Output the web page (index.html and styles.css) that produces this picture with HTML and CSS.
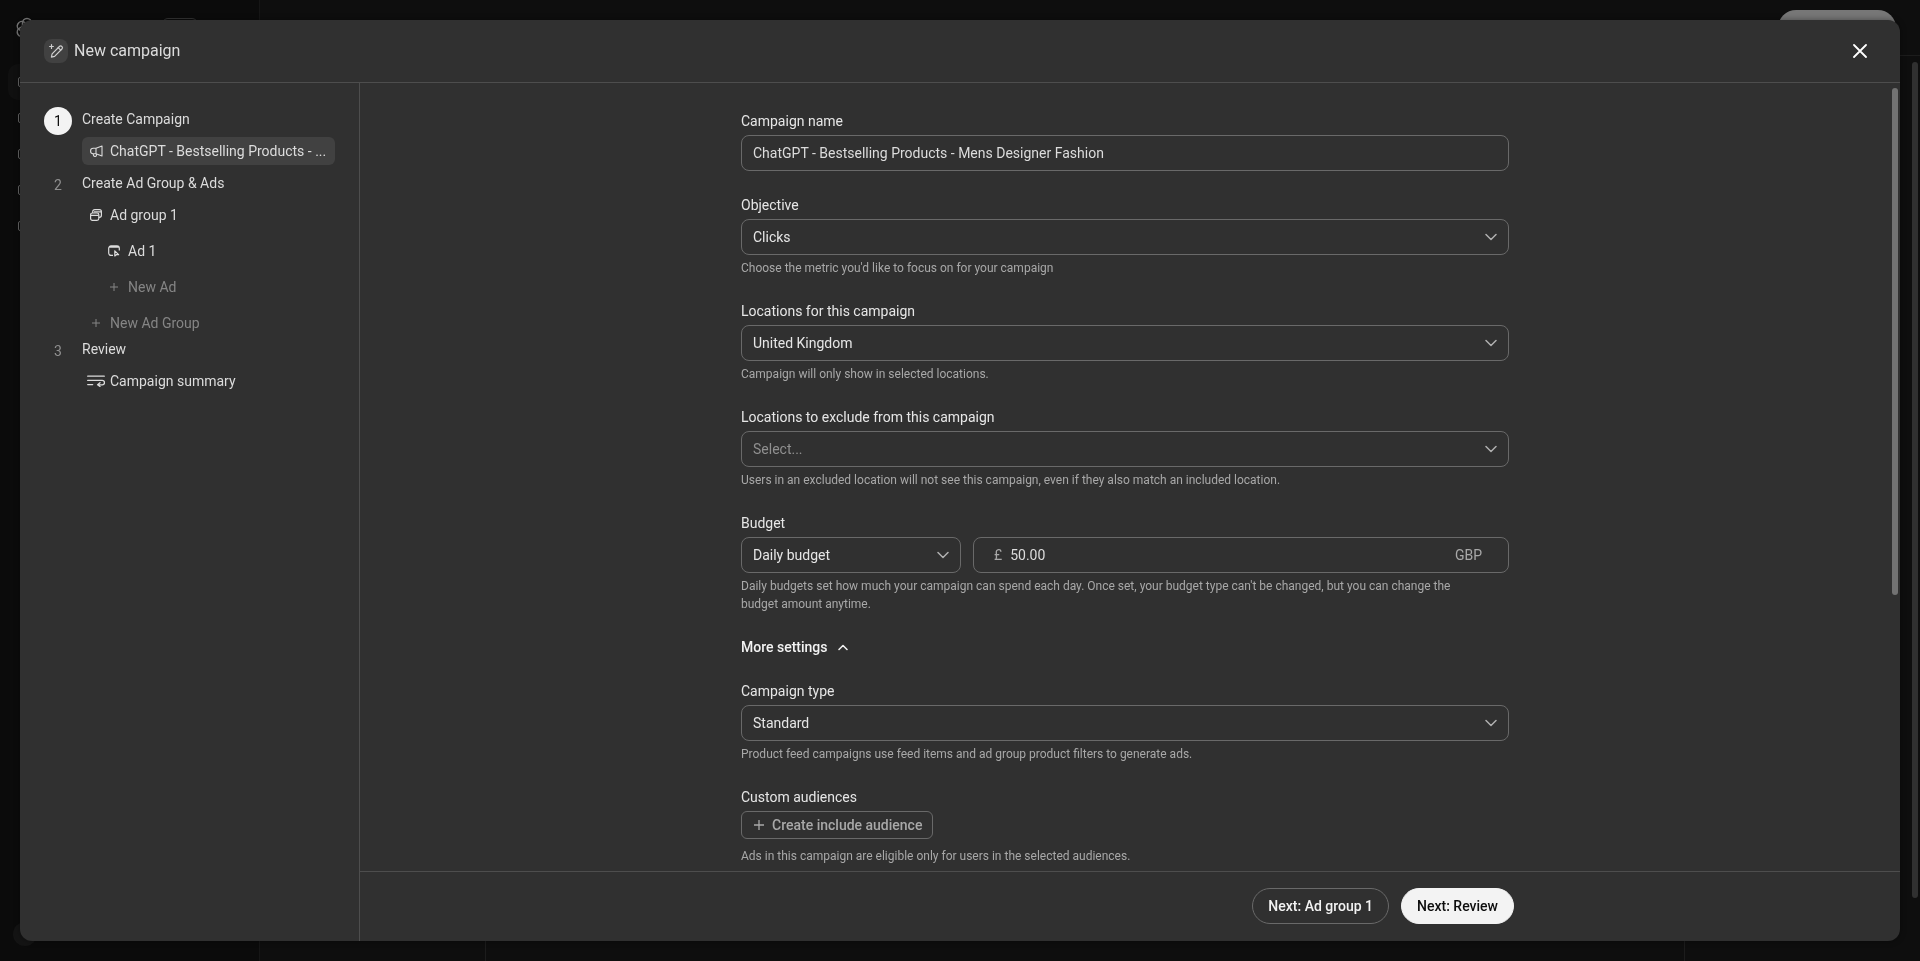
FILE: index.html
```html
<!DOCTYPE html>
<html lang="en">
<head>
    <meta charset="UTF-8">
    <meta name="viewport" content="width=device-width, initial-scale=1.0">
    <title>New campaign</title>
    <link rel="stylesheet" href="styles.css">
</head>
<body>
    <!-- Page behind the dialog -->
    <div class="app" aria-hidden="true">
        <div class="app-nav">
            <svg class="app-logo" width="24" height="24" viewBox="0 0 24 24" fill="none" stroke="currentColor" stroke-width="1.5">
                <rect x="7.500" y="1.500" width="9" height="21" rx="4.500"/>
                <rect x="7.500" y="1.500" width="9" height="21" rx="4.500" transform="rotate(60 12 12)"/>
                <rect x="7.500" y="1.500" width="9" height="21" rx="4.500" transform="rotate(120 12 12)"/>
            </svg>
            <span class="app-switch"></span>
            <span class="app-nav-item app-nav-active"><i></i></span>
            <span class="app-nav-item"><i></i></span>
            <span class="app-nav-item"><i></i></span>
            <span class="app-nav-item"><i></i></span>
            <span class="app-nav-item"><i></i></span>
            <span class="app-avatar"></span>
        </div>
        <div class="app-page">
            <div class="app-topbar"><span class="app-cta"></span></div>
            <div class="app-body"></div>
            <span class="app-scrollbar"></span>
        </div>
    </div>

    <div class="modal" role="dialog" aria-labelledby="modal-title">
        <header class="modal-header">
            <span class="modal-icon">
                <svg width="16" height="16" viewBox="0 0 16 16" fill="none" stroke="currentColor" stroke-width="1.2" stroke-linecap="round" stroke-linejoin="round">
                    <path d="M3.400 14.200l.7-3.400 7.300-7.300a1.700 1.700 0 0 1 2.500 2.500l-7.300 7.300z"/>
                    <path d="M10.200 4.700l2.500 2.500"/>
                    <path d="M3.500 1.600v3.800M1.600 3.500h3.800"/>
                </svg>
            </span>
            <h1 id="modal-title" class="modal-title">New campaign</h1>
            <button type="button" class="btn-close" aria-label="Close">
                <svg width="14" height="14" viewBox="0 0 14 14" fill="none" stroke="currentColor" stroke-width="1.8" stroke-linecap="round"><path d="M1 1l12 12M13 1L1 13"/></svg>
            </button>
        </header>

        <div class="modal-body">
            <!-- Steps -->
            <nav class="steps" aria-label="Steps">
                <section class="step">
                    <span class="step-number step-current">1</span>
                    <div class="step-content">
                        <h2 class="step-title">Create Campaign</h2>
                        <a href="#" class="step-item selected">
                            <span class="step-icon">
                                <svg width="13" height="13" viewBox="0 0 13 13" fill="none" stroke="currentColor" stroke-width="1.100" stroke-linejoin="round" stroke-linecap="round">
                                    <path d="M6 3.200 12 1v10L6 8.700zM6 3.200H3.300a2.700 2.700 0 0 0 0 5.500H6M3 8.800l.6 1.700a1.500 1.500 0 0 0 2.900-.7V8.800"/>
                                </svg>
                            </span>
                            <span class="step-text">ChatGPT - Bestselling Products - ...</span>
                        </a>
                    </div>
                </section>
                <section class="step">
                    <span class="step-number">2</span>
                    <div class="step-content">
                        <h2 class="step-title">Create Ad Group &amp; Ads</h2>
                        <a href="#" class="step-item">
                            <span class="step-icon">
                                <svg width="12" height="12" viewBox="0 0 12 12" fill="none" stroke="currentColor" stroke-width="1.200">
                                    <rect x=".6" y="4" width="8.200" height="7.300" rx="1.800"/>
                                    <path d="M.8 6.400h7.800M2.700 4V2.700a2 2 0 0 1 2-2h4.700a2 2 0 0 1 2 2v3.600a2 2 0 0 1-2 2h-.6M4 2.900h7"/>
                                </svg>
                            </span>
                            <span class="step-text">Ad group 1</span>
                        </a>
                        <a href="#" class="step-item nested">
                            <span class="step-icon">
                                <svg width="12" height="12" viewBox="0 0 12 12" fill="none" stroke="currentColor" stroke-width="1.200" stroke-linejoin="round">
                                    <path d="M5 10.400H3a2.300 2.300 0 0 1-2.300-2.300V3.200A2.300 2.300 0 0 1 3 .9h6a2.300 2.300 0 0 1 2.300 2.300v2.400M1.200 2.200h9.600"/>
                                    <path d="M6.800 5.800v5.200l1.500-1.300h2.300z"/>
                                </svg>
                            </span>
                            <span class="step-text">Ad 1</span>
                        </a>
                        <button type="button" class="step-item step-add nested">
                            <span class="step-icon"><svg width="8" height="8" viewBox="0 0 8 8" stroke="currentColor"><path d="M4 0v8M0 4h8"/></svg></span>
                            <span class="step-text">New Ad</span>
                        </button>
                        <button type="button" class="step-item step-add">
                            <span class="step-icon"><svg width="8" height="8" viewBox="0 0 8 8" stroke="currentColor"><path d="M4 0v8M0 4h8"/></svg></span>
                            <span class="step-text">New Ad Group</span>
                        </button>
                    </div>
                </section>
                <section class="step">
                    <span class="step-number">3</span>
                    <div class="step-content">
                        <h2 class="step-title">Review</h2>
                        <a href="#" class="step-item">
                            <span class="step-icon">
                                <svg width="18" height="12" viewBox="0 0 18 12" fill="none" stroke="currentColor" stroke-width="1.300" stroke-linecap="round" stroke-linejoin="round">
                                    <path d="M.7 1.200h16.600M.7 5.400h14.600a2.200 2.200 0 0 1 0 4.400H11M.7 9.600h5M13 7.700l-2.400 2.100L13 11.500"/>
                                </svg>
                            </span>
                            <span class="step-text">Campaign summary</span>
                        </a>
                    </div>
                </section>
            </nav>

            <div class="main">
                <div class="scroll-area">
                    <form id="campaign-form" class="form">
                        <div class="form-group">
                            <label for="name" class="form-label">Campaign name</label>
                            <input type="text" id="name" class="form-input" value="ChatGPT - Bestselling Products - Mens Designer Fashion">
                        </div>

                        <div class="form-group">
                            <label for="objective" class="form-label">Objective</label>
                            <div class="select">
                                <select id="objective" class="form-input"><option>Clicks</option></select>
                                <svg class="chevron" width="12" height="8" viewBox="0 0 12 8"><path d="M1 1.500l5 5 5-5"/></svg>
                            </div>
                            <p class="help">Choose the metric you'd like to focus on for your campaign</p>
                        </div>

                        <div class="form-group">
                            <label for="locations" class="form-label">Locations for this campaign</label>
                            <div class="select">
                                <select id="locations" class="form-input"><option>United Kingdom</option></select>
                                <svg class="chevron" width="12" height="8" viewBox="0 0 12 8"><path d="M1 1.500l5 5 5-5"/></svg>
                            </div>
                            <p class="help">Campaign will only show in selected locations.</p>
                        </div>

                        <div class="form-group">
                            <label for="excluded" class="form-label">Locations to exclude from this campaign</label>
                            <div class="select">
                                <select id="excluded" class="form-input placeholder"><option>Select...</option></select>
                                <svg class="chevron" width="12" height="8" viewBox="0 0 12 8"><path d="M1 1.500l5 5 5-5"/></svg>
                            </div>
                            <p class="help">Users in an excluded location will not see this campaign, even if they also match an included location.</p>
                        </div>

                        <div class="form-group">
                            <label for="budget-type" class="form-label">Budget</label>
                            <div class="budget-row">
                                <div class="select">
                                    <select id="budget-type" class="form-input"><option>Daily budget</option></select>
                                    <svg class="chevron" width="12" height="8" viewBox="0 0 12 8"><path d="M1 1.500l5 5 5-5"/></svg>
                                </div>
                                <div class="amount">
                                    <span>£</span>
                                    <input type="text" id="amount" class="amount-input" value="50.00" aria-label="Budget amount">
                                    <span>GBP</span>
                                </div>
                            </div>
                            <p class="help help-narrow">Daily budgets set how much your campaign can spend each day. Once set, your budget type can't be changed, but you can change the budget amount anytime.</p>
                        </div>

                        <button type="button" class="btn-more" aria-expanded="true">
                            More settings
                            <svg width="10" height="7" viewBox="0 0 10 7" fill="none" stroke="currentColor" stroke-width="1.500" stroke-linecap="round" stroke-linejoin="round"><path d="M1 5.500l4-4 4 4"/></svg>
                        </button>

                        <div class="form-group">
                            <label for="type" class="form-label">Campaign type</label>
                            <div class="select">
                                <select id="type" class="form-input"><option>Standard</option></select>
                                <svg class="chevron" width="12" height="8" viewBox="0 0 12 8"><path d="M1 1.500l5 5 5-5"/></svg>
                            </div>
                            <p class="help">Product feed campaigns use feed items and ad group product filters to generate ads.</p>
                        </div>

                        <div class="form-group">
                            <span class="form-label">Custom audiences</span>
                            <button type="button" class="btn-audience">
                                <svg width="10" height="10" viewBox="0 0 10 10" stroke="currentColor" stroke-width="1.300"><path d="M5 0v10M0 5h10"/></svg>
                                Create include audience
                            </button>
                            <p class="help help-spaced">Ads in this campaign are eligible only for users in the selected audiences.</p>
                        </div>
                    </form>
                    <span class="scrollbar" aria-hidden="true"></span>
                </div>

                <footer class="modal-footer">
                    <div class="footer-actions">
                        <button type="button" class="btn">Next: Ad group 1</button>
                        <button type="submit" form="campaign-form" class="btn btn-primary">Next: Review</button>
                    </div>
                </footer>
            </div>
        </div>
    </div>
</body>
</html>
```
FILE: styles.css
```css
* {
    margin: 0;
    padding: 0;
    box-sizing: border-box;
}

body {
    font-family: Roboto, "Liberation Sans", sans-serif;
    font-size: 14px;
    line-height: 20px;
    color: #dcdcdc;
    background: #0e0e0e;
    height: 100vh;
    overflow: hidden;
}

button,
input,
select {
    font: inherit;
    color: inherit;
    background: none;
    border: none;
}

button {
    cursor: pointer;
}

a {
    color: inherit;
    text-decoration: none;
}

/* Page behind the dialog */
.app {
    position: fixed;
    inset: 0;
    display: flex;
}

.app-nav {
    position: relative;
    width: 260px;
    padding: 64px 8px 0;
    background: #0b0b0b;
    border-right: 1px solid #161616;
}

.app-logo {
    position: absolute;
    left: 15px;
    top: 17px;
    color: #777;
}

.app-switch {
    position: absolute;
    left: 162px;
    top: 18px;
    width: 36px;
    height: 20px;
    border: 1px solid #333;
    border-radius: 6px;
}

.app-nav-item {
    display: flex;
    align-items: center;
    height: 36px;
    padding-left: 10px;
    border-radius: 10px;
}

.app-nav-item i {
    width: 12px;
    height: 10px;
    border: 1px solid #666;
    border-radius: 2px;
}

.app-nav-active {
    background: #101010;
}

.app-avatar {
    position: absolute;
    left: 13px;
    bottom: 15px;
    width: 24px;
    height: 24px;
    border-radius: 50%;
    background: #141414;
}

.app-page {
    position: relative;
    flex: 1;
    display: flex;
    flex-direction: column;
}

.app-topbar {
    height: 56px;
    padding: 10px 24px;
    border-bottom: 1px solid #1c1c1c;
    display: flex;
    justify-content: flex-end;
}

.app-cta {
    width: 118px;
    height: 36px;
    border-radius: 18px;
    background: #777;
}

.app-body {
    flex: 1;
    margin: 0 235px 0 225px;
    border: solid #1c1c1c;
    border-width: 0 1px;
}

.app-scrollbar {
    position: absolute;
    right: 2px;
    top: 62px;
    bottom: 63px;
    width: 6px;
    border-radius: 3px;
    background: #303030;
}

/* Dialog */
.modal {
    position: fixed;
    inset: 20px;
    display: flex;
    flex-direction: column;
    background: #303030;
    border-radius: 12px;
    box-shadow: 0 0 6px rgba(0, 0, 0, 0.4);
    overflow: hidden;
}

.modal-header {
    display: flex;
    align-items: center;
    gap: 6px;
    height: 63px;
    padding: 0 24px;
    border-bottom: 1px solid #4d4d4d;
}

.modal-icon {
    display: flex;
    align-items: center;
    justify-content: center;
    width: 24px;
    height: 24px;
    border-radius: 8px;
    background: #414141;
    color: #cdcdcd;
}

.modal-title {
    flex: 1;
    font-size: 16px;
    font-weight: 400;
}

.btn-close {
    display: flex;
    align-items: center;
    justify-content: center;
    width: 32px;
    height: 32px;
    color: #fff;
}

.modal-body {
    flex: 1;
    display: flex;
    min-height: 0;
}

/* Steps */
.steps {
    width: 340px;
    padding: 24px;
    border-right: 1px solid #4d4d4d;
}

.step {
    display: flex;
    gap: 10px;
}

.step:first-child {
    margin-bottom: 6px;
}

.step-number {
    flex: none;
    width: 28px;
    height: 28px;
    border-radius: 50%;
    line-height: 28px;
    text-align: center;
    color: #8f8f8f;
}

.step-current {
    background: #f3f3f3;
    color: #0d0d0d;
}

.step-content {
    flex: 1;
    min-width: 0;
    display: flex;
    flex-direction: column;
    gap: 8px;
}

.step-title {
    height: 22px;
    font-size: 14px;
    font-weight: 400;
    line-height: 24px;
}

.step-item {
    display: flex;
    align-items: center;
    gap: 8px;
    height: 28px;
    padding: 0 4px 0 8px;
    border-radius: 6px;
    text-align: left;
}

.step-item.selected {
    background: #414141;
}

.step-item.nested {
    margin-left: 18px;
}

.step-add {
    color: #858585;
}

.step-icon {
    flex: none;
    display: flex;
    align-items: center;
    justify-content: center;
    width: 12px;
}

.step-icon svg {
    flex: none;
}

.step-text {
    white-space: nowrap;
}

/* Form */
.main {
    flex: 1;
    min-width: 0;
    display: flex;
    flex-direction: column;
}

.scroll-area {
    position: relative;
    flex: 1;
    min-height: 0;
    padding: 28px 10px 0 0;
    overflow: hidden;
}

.scrollbar {
    position: absolute;
    top: 5px;
    right: 2px;
    bottom: 35%;
    width: 6px;
    border-radius: 3px;
    background: #727272;
}

.form {
    display: flex;
    flex-direction: column;
    gap: 24px;
    width: 100%;
    max-width: 768px;
    margin: 0 auto;
}

.form-label {
    display: block;
    margin-bottom: 4px;
    color: #e6e6e6;
}

.form-input {
    display: block;
    width: 100%;
    height: 36px;
    padding: 0 11px;
    border: 1px solid #696969;
    border-radius: 8px;
}

.select {
    position: relative;
}

select.form-input {
    appearance: none;
    padding-right: 32px;
    color: #e6e6e6;
}

select.placeholder {
    color: #8f8f8f;
}

.chevron {
    position: absolute;
    right: 12px;
    top: 14px;
    fill: none;
    stroke: #afafaf;
    stroke-width: 1.5;
    stroke-linecap: round;
    stroke-linejoin: round;
    pointer-events: none;
}

.help {
    margin-top: 4px;
    font-size: 12px;
    line-height: 18px;
    color: #a8a8a8;
}

.help-narrow {
    max-width: 744px;
}

.help-spaced {
    margin-top: 8px;
}

.budget-row {
    display: grid;
    grid-template-columns: 220px 1fr;
    gap: 12px;
}

.amount {
    display: flex;
    align-items: center;
    gap: 8px;
    padding: 0 26px 0 20px;
    border: 1px solid #696969;
    border-radius: 8px;
    color: #a8a8a8;
}

.amount-input {
    flex: 1;
    min-width: 0;
    color: #dcdcdc;
}

.btn-more {
    display: flex;
    align-items: center;
    align-self: flex-start;
    gap: 10px;
    font-weight: 500;
    color: #f3f3f3;
}

.btn-audience {
    display: flex;
    align-items: center;
    gap: 8px;
    height: 28px;
    padding: 0 10px 0 12px;
    border: 1px solid #696969;
    border-radius: 6px;
    font-weight: 500;
    color: #a8a8a8;
}

/* Footer */
.modal-footer {
    height: 70px;
    padding: 16px 0;
    border-top: 1px solid #4d4d4d;
}

.footer-actions {
    display: flex;
    justify-content: flex-end;
    gap: 12px;
    width: 100%;
    max-width: 768px;
    margin: 0 auto;
}

.btn {
    height: 36px;
    padding: 0 15px;
    border: 1px solid #696969;
    border-radius: 18px;
    font-weight: 500;
    color: #f3f3f3;
}

.btn-primary {
    background: #f3f3f3;
    border-color: #f3f3f3;
    color: #0d0d0d;
}
```
